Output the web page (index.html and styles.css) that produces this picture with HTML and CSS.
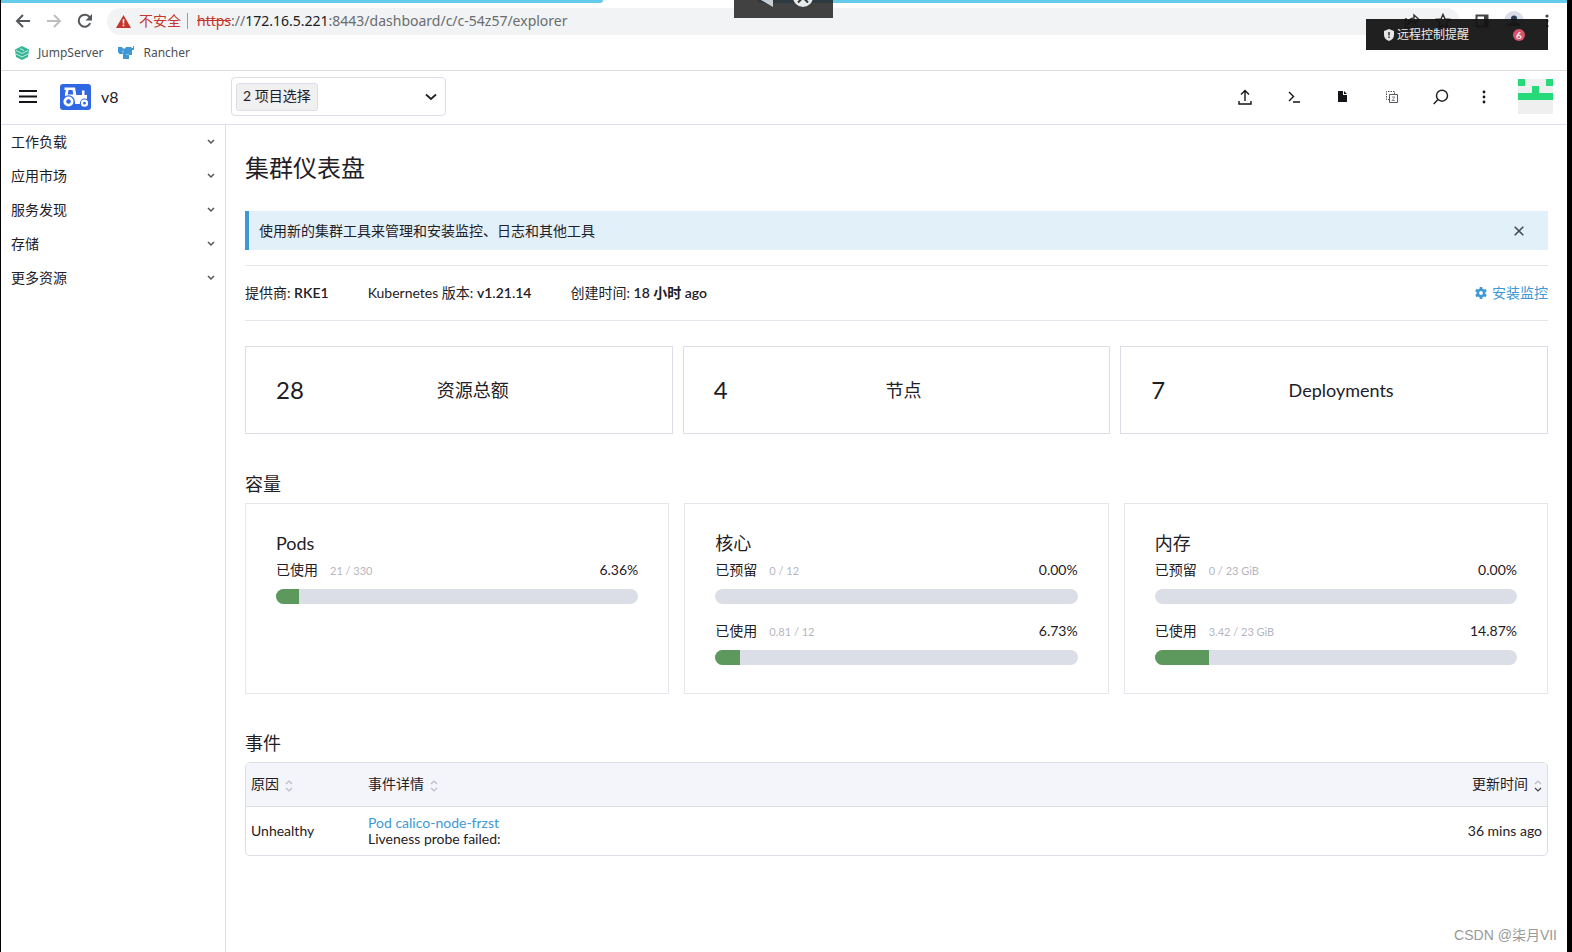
FILE: index.html
```html
<!DOCTYPE html>
<html lang="zh-CN">
<head>
<meta charset="utf-8">
<title>集群仪表盘</title>
<link rel="stylesheet" href="styles.css">
</head>
<body>
<div class="tabstrip"><span class="tabs-left"></span><span class="tab-active"></span><span class="tabs-right"></span></div>

<div class="toolbar">
  <button class="nav-btn" aria-label="后退"><svg width="16" height="16" viewBox="0 0 16 16" fill="none" stroke="#55585c" stroke-width="2"><path d="M15 8H2M8 2L2 8l6 6"/></svg></button>
  <button class="nav-btn" aria-label="前进"><svg width="16" height="16" viewBox="0 0 16 16" fill="none" stroke="#bcbec0" stroke-width="2"><path d="M1 8h13M8 2l6 6-6 6"/></svg></button>
  <button class="nav-btn" aria-label="刷新"><svg width="16" height="16" viewBox="0 0 16 16"><path d="M13.2 10.2A6 6 0 1 1 12.6 4.2" fill="none" stroke="#55585c" stroke-width="2"/><path d="M15 1v6.5H8.5z" fill="#55585c"/></svg></button>
  <div class="address">
    <svg width="15" height="13" viewBox="0 0 15 13"><path d="M7.500 0L15 13H0z" fill="#c5352b"/><path d="M7.500 4v4.500M7.500 9.500v1.800" stroke="#f1f3f4" stroke-width="1.600"/></svg>
    <span class="insecure">不安全</span>
    <span class="divider"></span>
    <span class="url"><s>https</s>://<b>172.16.5.221</b>:8443/dashboard/c/c-54z57/explorer</span>
    <span class="address-actions">
      <svg width="16" height="16" viewBox="0 0 16 16" fill="none" stroke="#333" stroke-width="1.400"><path d="M3 6H1.500v9h11v-3M4 11c.5-4 3-6 6-6V2l5 4.500L10 11V8c-3 0-4.500 1-6 3z"/></svg>
      <svg width="16" height="16" viewBox="0 0 16 16" fill="none" stroke="#333" stroke-width="1.500"><path d="M8 1.500l2 4.500 5 .5-3.800 3.200L12.400 14.500 8 12l-4.400 2.500 1.200-4.800L1 6.500 6 6z"/></svg>
    </span>
  </div>
  <div class="browser-actions">
    <svg width="14" height="14" viewBox="0 0 14 14"><path d="M1.500 1.500h11v11h-11z" fill="none" stroke="#444" stroke-width="2"/><path d="M9 1h4v12H9z" fill="#444"/></svg>
    <svg width="20" height="20" viewBox="0 0 20 20"><circle cx="10" cy="10" r="10" fill="#d8dce6"/><circle cx="10" cy="7.500" r="3" fill="#2d3a55"/><path d="M4 15c0-5 12-5 12 0z" fill="#2d3a55"/></svg>
    <svg width="16" height="14" viewBox="0 0 16 14" fill="#444"><circle cx="8" cy="2" r="1.600"/><circle cx="8" cy="7" r="1.600"/><circle cx="8" cy="12" r="1.600"/></svg>
  </div>
</div>

<nav class="bookmarks">
  <a href="#"><svg width="14" height="14" viewBox="0 0 14 14"><path d="M7 0l7 3.500-1 7.500-6 3-6-3L0 3.500z" fill="#35b595"/><path d="M1 4.500L7 7.500l6-3M1 8L7 11l6-3M5 2.500l4 2" fill="none" stroke="#d5f5ea" stroke-width=".9"/></svg>JumpServer</a>
  <a href="#"><svg width="16" height="14" viewBox="0 0 16 14"><path d="M0 1h4l1 1.500h2L8 1h5.500v1H15V0h1v4h-2v5h-3v4H5V8H1.500L0 6z" fill="#3d98d3"/><path d="M5 4v3.500M8 8.500h3" stroke="#8cc7ea"/></svg>Rancher</a>
</nav>

<header class="header">
  <button class="menu" aria-label="菜单"><svg width="18" height="13" viewBox="0 0 18 13"><path d="M0 1h18M0 6.500h18M0 12h18" stroke="#141419" stroke-width="2"/></svg></button>
  <svg class="logo" width="31" height="26" viewBox="0 0 31 26"><rect width="31" height="26" rx="3" fill="#3067e3"/><path d="M4.500 3.500H15l1.300 7.500H22V6.500h2.500V11H27v5l-2 1H14l-6-4H5V9l1-3H4.500z" fill="#fff"/><path d="M8.500 6h4l.8 4.500H7.800z" fill="#3067e3"/><circle cx="8.500" cy="17.500" r="6.300" fill="#3067e3"/><circle cx="8.500" cy="17.500" r="3.700" fill="none" stroke="#fff" stroke-width="2.800"/><path d="M15 16h7v4h-7z" fill="#fff"/><circle cx="24.500" cy="19.200" r="4.600" fill="#3067e3"/><circle cx="24.500" cy="19.200" r="2.500" fill="none" stroke="#fff" stroke-width="2.200"/></svg>
  <span class="cluster">v8</span>
  <button class="project-filter"><span class="tag">2 项目选择</span><svg width="12" height="8" viewBox="0 0 12 8" fill="none" stroke="#222" stroke-width="1.800"><path d="M1 1.500l5 4.500 5-4.500"/></svg></button>
  <div class="actions">
    <button aria-label="导入 YAML"><svg width="14" height="16" viewBox="0 0 14 16" fill="none" stroke="#141419" stroke-width="1.400"><path d="M7 12V1.500M3 5.500l4-4 4 4M1 12v3h12v-3"/></svg></button>
    <button aria-label="Kubectl Shell"><svg width="12" height="12" viewBox="0 0 12 12" fill="none" stroke="#141419" stroke-width="1.400"><path d="M1 1l4.500 4.500L1 10M5 11h7"/></svg></button>
    <button aria-label="下载 KubeConfig"><svg width="9" height="11" viewBox="0 0 9 11" fill="#141419"><path d="M0 0h5v4h4v7H0z"/><path d="M6 0l3 3H6z"/></svg></button>
    <button aria-label="复制 KubeConfig"><svg width="12" height="12" viewBox="0 0 12 12" fill="none" stroke="#55575e"><path d="M8.500 3V.5h-8v8H3" stroke-dasharray="1.500 1"/><path d="M3.500 3.500h8v8h-8z"/><path d="M6 6h3L6 9.500h3" stroke="#85878e"/></svg></button>
    <button aria-label="搜索"><svg width="16" height="16" viewBox="0 0 16 16" fill="none" stroke="#222" stroke-width="1.500"><circle cx="9" cy="6.700" r="5.500"/><path d="M5 10.500L.7 15"/></svg></button>
    <button class="more" aria-label="更多"><svg width="4" height="14" viewBox="0 0 4 14" fill="#141419"><circle cx="2" cy="2" r="1.400"/><circle cx="2" cy="7" r="1.400"/><circle cx="2" cy="12" r="1.400"/></svg></button>
    <svg class="avatar" width="35" height="35" viewBox="0 0 5 5" shape-rendering="crispEdges"><path d="M0 0h5v5H0z" fill="#efefef"/><path d="M0 0h1v1H0zM4 0h1v1H4zM2 1h1v1H2zM0 2h5v1H0z" fill="#26d979"/></svg>
  </div>
</header>

<div class="layout">
  <nav class="sidebar">
    <button>工作负载<svg width="8" height="6" viewBox="0 0 8 6"><path d="M1 1l3 3 3-3"/></svg></button>
    <button>应用市场<svg width="8" height="6" viewBox="0 0 8 6"><path d="M1 1l3 3 3-3"/></svg></button>
    <button>服务发现<svg width="8" height="6" viewBox="0 0 8 6"><path d="M1 1l3 3 3-3"/></svg></button>
    <button>存储<svg width="8" height="6" viewBox="0 0 8 6"><path d="M1 1l3 3 3-3"/></svg></button>
    <button>更多资源<svg width="8" height="6" viewBox="0 0 8 6"><path d="M1 1l3 3 3-3"/></svg></button>
  </nav>
  <main class="main">
    <h1>集群仪表盘</h1>
    <div class="banner"><span>使用新的集群工具来管理和安装监控、日志和其他工具</span><button aria-label="关闭"><svg width="10" height="10" viewBox="0 0 10 10"><path d="M.7.7l8.600 8.600M9.300.7L.7 9.300" stroke="#444a50" stroke-width="1.600"/></svg></button></div>
    <div class="glance">
      <span>提供商: <b>RKE1</b></span>
      <span>Kubernetes 版本: <b>v1.21.14</b></span>
      <span>创建时间: <b>18 小时 ago</b></span>
      <a href="#"><svg width="12" height="12" viewBox="0 0 12 12"><circle cx="6" cy="6" r="3.200" fill="none" stroke="#3d98d3" stroke-width="2.600"/><path d="M6 0v2.500M6 9.500V12M.8 3l2.200 1.200M9 7.800L11.200 9M.8 9L3 7.800M9 4.200L11.200 3" stroke="#3d98d3" stroke-width="2.600"/></svg>安装监控</a>
    </div>
    <section class="counts">
      <div class="count"><strong>28</strong><span>资源总额</span></div>
      <div class="count"><strong>4</strong><span>节点</span></div>
      <div class="count"><strong>7</strong><span>Deployments</span></div>
    </section>
    <h2>容量</h2>
    <section class="capacity">
      <div class="gauge">
        <h3>Pods</h3>
        <div class="row"><span>已使用</span><small>21 / 330</small><span class="pct">6.36%</span></div>
        <div class="bar"><i style="width:6.36%"></i></div>
      </div>
      <div class="gauge">
        <h3>核心</h3>
        <div class="row"><span>已预留</span><small>0 / 12</small><span class="pct">0.00%</span></div>
        <div class="bar"></div>
        <div class="row"><span>已使用</span><small>0.81 / 12</small><span class="pct">6.73%</span></div>
        <div class="bar"><i style="width:6.73%"></i></div>
      </div>
      <div class="gauge">
        <h3>内存</h3>
        <div class="row"><span>已预留</span><small>0 / 23 GiB</small><span class="pct">0.00%</span></div>
        <div class="bar"></div>
        <div class="row"><span>已使用</span><small>3.42 / 23 GiB</small><span class="pct">14.87%</span></div>
        <div class="bar"><i style="width:14.87%"></i></div>
      </div>
    </section>
    <h2>事件</h2>
    <table class="events">
      <thead><tr>
        <th class="reason">原因<svg width="8" height="12" viewBox="0 0 8 12"><path d="M1 4l3-3 3 3M1 8l3 3 3-3"/></svg></th>
        <th>事件详情<svg width="8" height="12" viewBox="0 0 8 12"><path d="M1 4l3-3 3 3M1 8l3 3 3-3"/></svg></th>
        <th class="date">更新时间<svg width="8" height="12" viewBox="0 0 8 12"><path d="M1 4l3-3 3 3"/><path class="on" d="M1 8l3 3 3-3"/></svg></th>
      </tr></thead>
      <tbody><tr>
        <td>Unhealthy</td>
        <td><a href="#">Pod calico-node-frzst</a><br>Liveness probe failed:</td>
        <td class="date">36 mins ago</td>
      </tr></tbody>
    </table>
  </main>
</div>

<div class="remote-handle"><svg width="99" height="18" viewBox="0 0 99 18"><path d="M0 0h99v18H0z" fill="#414141"/><path d="M24 0h75v3H24z" fill="#2f3a40"/><path d="M27 0h12v7z" fill="#c8ced2"/><circle cx="69" cy="-3" r="10" fill="#e8ebec"/><path d="M64 2.500l5-5 5 5" fill="none" stroke="#333" stroke-width="2"/></svg></div>
<div class="remote-alert"><svg width="10" height="12" viewBox="0 0 10 12"><path d="M5 0l5 2v4c0 3-2 5-5 6-3-1-5-3-5-6V2z" fill="#e6e6e6"/><path d="M5 3v3.500M5 7.500V9" stroke="#222" stroke-width="1.400"/></svg><span>远程控制提醒</span><em>6</em></div>
<div class="watermark">CSDN @柒月VII</div>
</body>
</html>
```
FILE: styles.css
```css
* { box-sizing: border-box; }
body {
  margin: 0;
  min-height: 100vh;
  display: flex;
  flex-direction: column;
  position: relative;
  border-left: 1px solid #000;
  border-right: 5px solid #000;
  background: #fff;
  color: #1f2026;
  font: 14px/20px Lato, "Noto Sans CJK SC", sans-serif;
}
button { margin: 0; padding: 0; border: 0; background: none; color: inherit; font: inherit; }
a { color: #3d98d3; text-decoration: none; }
svg { display: block; flex: none; }
h1, h2, h3 { margin: 0; font-weight: 400; }

.tabstrip { display: flex; height: 3px; }
.tabs-left { width: 602px; background: #65cbea; border-bottom-right-radius: 6px; }
.tab-active { width: 154px; }
.tabs-right { flex: 1; background: #65cbea; }

.toolbar { display: flex; align-items: center; height: 36px; padding: 0 12px 0 6px; }
.nav-btn { width: 31px; display: flex; justify-content: center; }
.address {
  flex: 1;
  display: flex;
  align-items: center;
  height: 27px;
  margin-left: 7px;
  padding: 0 9px;
  border-radius: 14px;
  background: #f1f3f4;
  font: 14px/20px "Noto Sans", "Noto Sans CJK SC", sans-serif;
  color: #6a6d70;
}
.insecure { margin-left: 8px; color: #c5352b; }
.divider { width: 1px; height: 16px; margin: 0 9px 0 6px; background: #9a9da0; }
.url b { font-weight: 400; color: #202124; }
.url s { color: #c5352b; }
.address-actions { display: flex; gap: 15px; margin-left: auto; }
.browser-actions { display: flex; align-items: center; gap: 15px; margin-left: 15px; }

.bookmarks {
  display: flex;
  align-items: center;
  gap: 15px;
  height: 32px;
  padding: 0 14px 4px;
  border-bottom: 1px solid #dcdcdc;
  font: 12px/20px "Noto Sans", sans-serif;
}
.bookmarks a { display: flex; align-items: center; gap: 9px; color: #4c5054; }

.header { display: flex; align-items: center; height: 54px; padding: 0 14px 2px 18px; border-bottom: 1px solid #dcdee7; }
.logo { margin-left: 23px; }
.cluster { width: 130px; margin-left: 10px; font-size: 16px; }
.project-filter {
  display: flex;
  align-items: center;
  justify-content: space-between;
  width: 215px;
  height: 39px;
  padding: 0 8px 0 4px;
  border: 1px solid #dcdee7;
  border-radius: 4px;
}
.tag { height: 28px; padding: 0 6px; border: 1px solid #dcdee7; border-radius: 3px; background: #f0f0f1; line-height: 24px; }
.actions { display: flex; align-items: center; margin-left: auto; }
.actions button { display: flex; justify-content: center; width: 49px; }
.actions .more { width: 38px; }
.avatar { margin-left: 15px; }

.layout { flex: 1; display: flex; }
.sidebar { width: 225px; border-right: 1px solid #dcdee7; }
.sidebar button { display: flex; align-items: center; justify-content: space-between; width: 100%; height: 34px; padding: 0 10px; }
.sidebar svg { fill: none; stroke: #555; stroke-width: 1.5; }

.main { flex: 1; padding: 26px 19px 20px; }
h1 { font-size: 24px; line-height: 34px; }
.banner {
  display: flex;
  align-items: center;
  justify-content: space-between;
  height: 39px;
  margin: 26px 0 15px;
  padding: 0 24px 0 10px;
  border-left: 4px solid #3d98d3;
  background: #e2f0f9;
}
.glance { display: flex; gap: 39px; padding: 17px 0; border: solid #e6e7ec; border-width: 1px 0; }
.glance b { font-weight: 600; }
.glance a { display: flex; align-items: center; gap: 5px; margin-left: auto; }
.counts { display: grid; grid-template-columns: repeat(3, 1fr); gap: 10px; margin: 25px 0 38px; }
.count { display: flex; align-items: center; height: 88px; padding: 0 30px; border: 1px solid #dcdee7; }
.count strong { font-size: 24px; font-weight: 400; }
.count span { flex: 1; font-size: 18px; text-align: center; }
h2 { font-size: 18px; line-height: 24px; }
.capacity { display: grid; grid-template-columns: repeat(3, 1fr); gap: 15px; margin: 7px 0 37px; }
.gauge { height: 191px; padding: 27px 30px; border: 1px solid #e4e6ec; }
h3 { font-size: 18px; line-height: 24px; }
.row { display: flex; align-items: baseline; margin: 5px 0 8px; }
.row small { margin-left: 12px; color: #b6b6c2; font-size: 11px; }
.pct { margin-left: auto; }
.bar { display: flex; height: 15px; border-radius: 8px; background: #dcdee7; overflow: hidden; }
.bar + .row { margin-top: 17px; }
.bar i { background: #5d995d; }

.events { width: 100%; margin-top: 7px; border: 1px solid #dcdee7; border-radius: 5px; border-spacing: 0; overflow: hidden; line-height: 16px; }
.events th { height: 44px; padding: 0 5px 2px; border-bottom: 1px solid #dcdee7; background: #f4f5fa; font-weight: 400; text-align: left; }
.events td { height: 48px; padding: 0 5px; }
.events .reason { width: 117px; }
.events .date { text-align: right; }
.events svg { display: inline-block; margin-left: 6px; vertical-align: -3px; fill: none; stroke: #b9bbc6; stroke-width: 1.2; }
.events .on { stroke: #444; }

.remote-handle { position: absolute; top: 0; left: 733px; }
.remote-alert {
  position: absolute;
  top: 19px;
  right: 19px;
  display: flex;
  align-items: center;
  width: 182px;
  height: 31px;
  padding: 0 23px 0 18px;
  background: rgba(20, 20, 20, .95);
  color: #eee;
  font-size: 12px;
}
.remote-alert span { margin-left: 3px; }
.remote-alert em { width: 12px; height: 12px; margin-left: auto; border-radius: 6px; background: #d9536b; font: bold 10px/12px Lato, sans-serif; text-align: center; }
.watermark { position: absolute; right: 10px; bottom: 6px; color: #999; font: 14px/22px "Liberation Sans", "Noto Sans CJK SC", sans-serif; }
```
